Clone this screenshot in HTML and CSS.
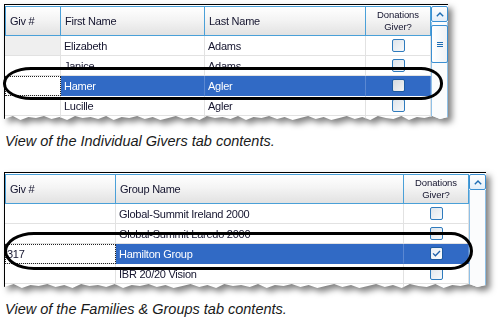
FILE: index.html
```html
<!DOCTYPE html>
<html lang="en">
<head>
  <meta charset="UTF-8">
  <title>Givers tabs</title>
  <link rel="stylesheet" href="styles.css">
</head>
<body>
  <div class="page">

    <div class="shot givers">
      <div class="frame">
        <div class="torn">
          <div class="table">
            <div class="row head">
              <div class="cell">Giv #</div>
              <div class="cell">First Name</div>
              <div class="cell">Last Name</div>
              <div class="cell center">Donations<br>Giver?</div>
            </div>
            <div class="row">
              <div class="cell idle"></div>
              <div class="cell">Elizabeth</div>
              <div class="cell">Adams</div>
              <div class="cell center"><span class="box"></span></div>
            </div>
            <div class="row">
              <div class="cell"></div>
              <div class="cell">Janice</div>
              <div class="cell">Adams</div>
              <div class="cell center"><span class="box"></span></div>
            </div>
            <div class="row selected">
              <div class="cell focus"></div>
              <div class="cell">Hamer</div>
              <div class="cell">Agler</div>
              <div class="cell center"><span class="box"></span></div>
            </div>
            <div class="row">
              <div class="cell"></div>
              <div class="cell">Lucille</div>
              <div class="cell">Agler</div>
              <div class="cell center"><span class="box"></span></div>
            </div>
            <div class="row">
              <div class="cell"></div>
              <div class="cell"></div>
              <div class="cell"></div>
              <div class="cell center"><span class="box"></span></div>
            </div>
          </div>
          <div class="scroll">
            <div class="up">
              <svg width="8" height="5" viewBox="0 0 8 5"><path d="M0.8 4.2 L4 1 L7.2 4.2" fill="none" stroke="#1d6db4" stroke-width="1.4"/></svg>
            </div>
            <div class="track">
              <div class="thumb">
                <svg width="6" height="5" viewBox="0 0 6 5"><path d="M0 0.5 H6 M0 2.5 H6 M0 4.5 H6" stroke="#1d6db4" stroke-width="1"/></svg>
              </div>
            </div>
          </div>
        </div>
      </div>
      <div class="oval"></div>
    </div>

    <p class="caption">View of the Individual Givers tab contents.</p>

    <div class="shot groups">
      <div class="frame">
        <div class="torn">
          <div class="table">
            <div class="row head">
              <div class="cell">Giv #</div>
              <div class="cell">Group Name</div>
              <div class="cell center">Donations<br>Giver?</div>
            </div>
            <div class="row">
              <div class="cell"></div>
              <div class="cell">Global-Summit Ireland 2000</div>
              <div class="cell center"><span class="box"></span></div>
            </div>
            <div class="row">
              <div class="cell"></div>
              <div class="cell">Global-Summit Laredo 2000</div>
              <div class="cell center"><span class="box"></span></div>
            </div>
            <div class="row selected">
              <div class="cell focus">317</div>
              <div class="cell">Hamilton Group</div>
              <div class="cell center">
                <span class="box checked">
                  <svg width="9" height="7" viewBox="0 0 9 7"><path d="M1 3.4 L3.4 5.8 L8 1" fill="none" stroke="#1d5fa8" stroke-width="1.3"/></svg>
                </span>
              </div>
            </div>
            <div class="row">
              <div class="cell"></div>
              <div class="cell">IBR 20/20 Vision</div>
              <div class="cell center"><span class="box"></span></div>
            </div>
            <div class="row">
              <div class="cell"></div>
              <div class="cell"></div>
              <div class="cell center"><span class="box"></span></div>
            </div>
          </div>
          <div class="scroll">
            <div class="up">
              <svg width="8" height="5" viewBox="0 0 8 5"><path d="M0.8 4.2 L4 1 L7.2 4.2" fill="none" stroke="#1d6db4" stroke-width="1.4"/></svg>
            </div>
            <div class="track"></div>
          </div>
        </div>
      </div>
      <div class="oval"></div>
    </div>

    <p class="caption last">View of the Families &amp; Groups tab contents.</p>

  </div>
</body>
</html>
```

FILE: styles.css
```css
body {
  margin: 0;
  background: #fff;
  font-family: "Liberation Sans", Arial, sans-serif;
}
.page {
  padding: 4px 0 0 4px;
}
.shot {
  position: relative;
  width: max-content;
}
.frame {
  filter: drop-shadow(4px 4px 3px rgba(0, 0, 0, 0.5));
}
.torn {
  display: flex;
  height: 116px;
  box-sizing: border-box;
  padding-top: 1px;
  background: #fff;
  border-top: 1px solid #000;
  border-left: 1px solid #000;
  overflow: hidden;
  clip-path: polygon(0 0, 100% 0,
    100% 113px, 98.2% 115px, 96.5% 112px, 94.7% 114px, 93% 113px, 91.2% 116px,
    89.5% 112px, 87.7% 115px, 86% 114px, 84.2% 112px, 82.5% 116px, 80.7% 113px,
    79% 115px, 77.2% 112px, 75.5% 114px, 73.7% 116px, 72% 113px, 70.2% 115px,
    68.5% 112px, 66.7% 114px, 65% 116px, 63.2% 113px, 61.5% 115px, 59.7% 112px,
    58% 114px, 56.2% 113px, 54.5% 116px, 52.7% 112px, 51% 115px, 49.2% 113px,
    47.5% 114px, 45.7% 112px, 44% 116px, 42.2% 113px, 40.5% 115px, 38.7% 112px,
    37% 114px, 35.2% 116px, 33.5% 113px, 31.7% 115px, 30% 112px, 28.2% 114px,
    26.5% 113px, 24.7% 116px, 23% 112px, 21.2% 115px, 19.5% 113px, 17.7% 114px,
    16% 112px, 14.2% 116px, 12.5% 113px, 10.7% 115px, 9% 112px, 7.2% 114px,
    5.5% 113px, 3.7% 116px, 2% 112px, 0 115px);
}

/* grid */
.table {
  font-size: 11px;
  letter-spacing: -0.25px;
  color: #14142e;
}
.row {
  display: grid;
}
.givers .row {
  grid-template-columns: 56px 144px 161px 65px;
}
.groups .row {
  grid-template-columns: 111px 288px 65px;
}
.cell {
  box-sizing: border-box;
  height: 20px;
  padding: 0 3px;
  display: flex;
  align-items: center;
  white-space: nowrap;
  overflow: hidden;
  border-right: 1px solid #e2e2e2;
  border-bottom: 1px solid #e2e2e2;
}
.cell.center {
  justify-content: center;
  text-align: center;
  padding: 0;
}
.cell.idle {
  background: #efefef;
}
.head .cell {
  height: 30px;
  padding-left: 4px;
  background: linear-gradient(#ffffff, #f4f4f4 45%, #e2e2e2);
  border-top: 1px solid #4aa0d8;
  border-right: 1px solid #4aa0d8;
  border-bottom: 1px solid #4aa0d8;
}
.head .cell:first-child {
  border-left: 1px solid #4aa0d8;
}
.head .cell.center {
  font-size: 9.5px;
  letter-spacing: -0.1px;
  line-height: 12px;
  padding: 0 0 1px;
}
.selected .cell {
  background: #316ac5;
  color: #fff;
  border-right-color: #5b88d2;
  border-bottom-color: #316ac5;
}
.selected .cell.focus {
  background: #fff;
  color: #14142e;
  padding-left: 2px;
  border-right-color: #e2e2e2;
  border-bottom-color: #e2e2e2;
  outline: 1px dotted #222;
  outline-offset: -1px;
}

/* checkboxes */
.box {
  box-sizing: border-box;
  width: 13px;
  height: 13px;
  border: 1px solid #2f7bbd;
  border-radius: 2px;
  background: linear-gradient(135deg, #dfe5eb, #f7f9fb);
  display: flex;
  align-items: center;
  justify-content: center;
}
.selected .box {
  background: linear-gradient(135deg, #d4d9de, #f4f4f4);
  border-color: #1d5aa0;
}
.box.checked {
  background: linear-gradient(135deg, #e9eef3, #fbfcfd);
}

/* scrollbar */
.scroll {
  width: 17px;
  display: flex;
  flex-direction: column;
}
.up {
  box-sizing: border-box;
  height: 16px;
  border: 1px solid #3a8fd2;
  border-radius: 2px;
  background: linear-gradient(#ffffff, #e3eef9);
  display: flex;
  align-items: center;
  justify-content: center;
}
.track {
  flex: 1;
  padding-top: 3px;
  background: #fbfcfd;
  border-left: 1px solid #8fc0e6;
  border-right: 1px solid #8fc0e6;
}
.thumb {
  box-sizing: border-box;
  height: 38px;
  margin: 0 -1px;
  border: 1px solid #3a8fd2;
  border-radius: 2px;
  background: linear-gradient(90deg, #ffffff, #eef2f6);
  display: flex;
  align-items: center;
  justify-content: center;
}

/* highlight ring drawn over the selected row */
.oval {
  position: absolute;
  box-sizing: border-box;
  border: 3px solid #000;
}
.givers .oval {
  left: -1px;
  top: 63px;
  width: 440px;
  height: 33px;
  border-radius: 28px 22px 22px 28px / 16px;
}
.groups .oval {
  left: 0;
  top: 60px;
  width: 469px;
  height: 38px;
  border-radius: 30px 22px 22px 30px / 19px;
}

.caption {
  margin: 13px 0 22px;
  padding-left: 1px;
  font-size: 14.5px;
  line-height: 17px;
  font-style: italic;
  color: #1a1a1a;
}
.caption.last {
  margin-bottom: 0;
}
```
